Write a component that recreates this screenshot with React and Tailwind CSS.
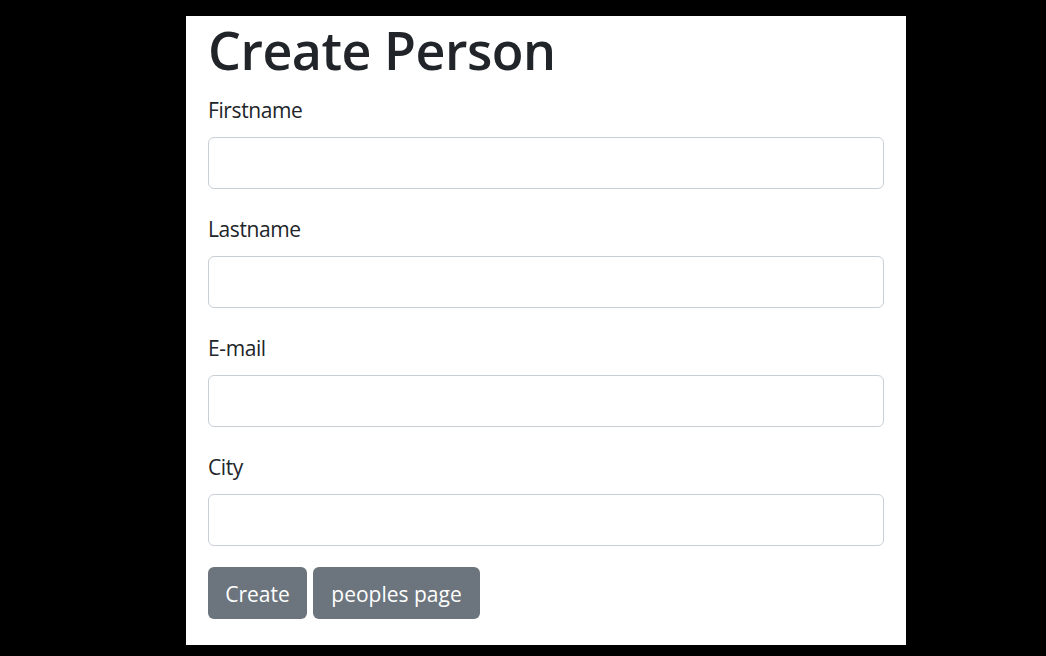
const fields = ['Firstname', 'Lastname', 'E-mail', 'City'];

export default function App() {
  return (
    <div
      className="min-h-[656px] bg-black pt-[16px] pl-[186px] text-[#212529]"
      style={{ fontFamily: '"Open Sans", "Noto Sans", sans-serif' }}
    >
      <div className="w-[720px] h-[629px] bg-white px-[22px] pt-[2px]">
        <h1 className="text-[52px] leading-[64px] font-semibold tracking-[-0.5px]">Create Person</h1>
        <form className="mt-[10px]">
          {fields.map((f, i) => (
            <div key={f} className={i > 0 ? 'mt-[22px]' : ''}>
              <label className="block text-[21px] leading-[36px] tracking-[-0.4px]">{f}</label>
              <input
                type="text"
                className="mt-[9px] block w-[676px] h-[52px] rounded-[6px] border border-[#c9cfd6] bg-white"
              />
            </div>
          ))}
          <div className="mt-[21px] flex gap-[6px]">
            <button type="button" className="w-[99px] h-[52px] pt-[3px] rounded-[6px] bg-[#6c757d] text-white text-[21px]">
              Create
            </button>
            <button type="button" className="w-[167px] h-[52px] pt-[3px] rounded-[6px] bg-[#6c757d] text-white text-[21px]">
              peoples page
            </button>
          </div>
        </form>
      </div>
    </div>
  );
}
